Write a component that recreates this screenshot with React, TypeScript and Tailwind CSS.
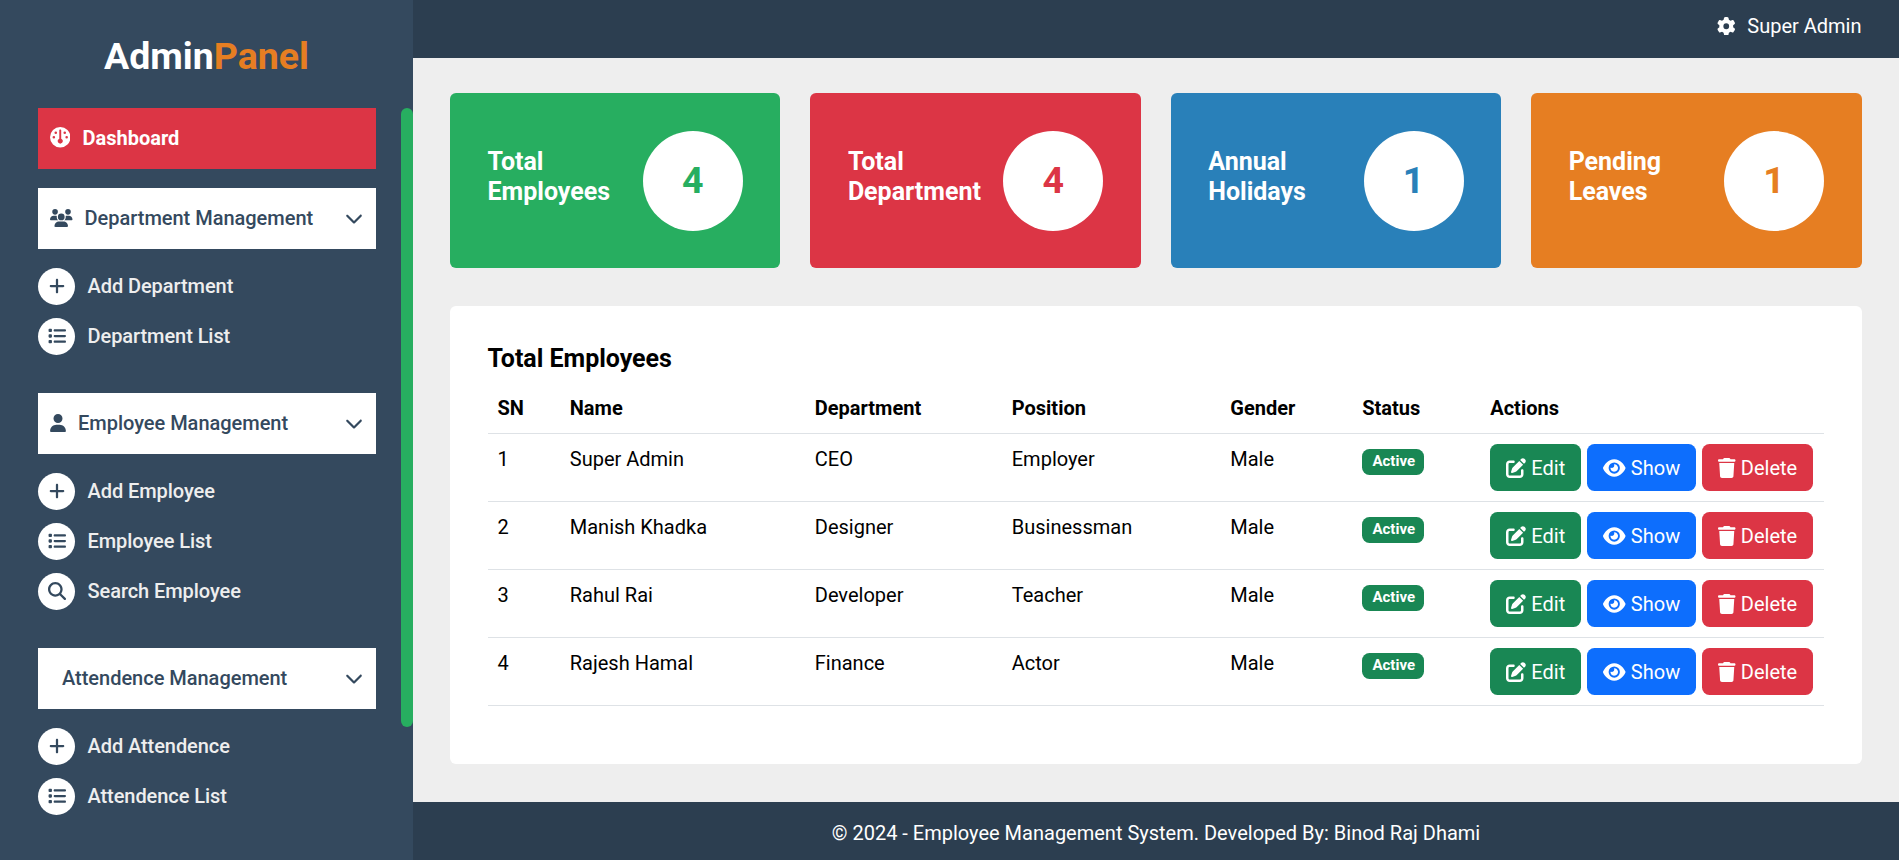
import { FaGauge, FaUsers, FaUser, FaPlus, FaList, FaMagnifyingGlass, FaChevronDown, FaGear, FaPenToSquare, FaEye, FaTrash } from "react-icons/fa6";
import type { ReactNode } from "react";

type Link = { label: string; icon: ReactNode };

function Group({ icon, title, links, className = "" }: { icon?: ReactNode; title: string; links: Link[]; className?: string }) {
  return (
    <section className={className}>
      <div className="flex h-[61.5px] items-center bg-white pl-3 pr-[13px] text-[20px] font-medium text-[#34495e]">
        {icon}
        <span className="ml-[12px] tracking-[-0.02px]">{title}</span>
        <FaChevronDown className="ml-auto text-[18px]" />
      </div>
      <ul className="mt-[18.5px] flex flex-col gap-[12.5px]">
        {links.map((l) => (
          <li key={l.label} className="flex items-center text-[20px] font-medium text-[#eee]">
            <span className="flex h-[37.5px] w-[37px] items-center justify-center rounded-full bg-white pb-px text-[18px] text-[#34495e]">{l.icon}</span>
            <span className="ml-[12.5px] pb-[1.5px] tracking-[-0.07px]">{l.label}</span>
          </li>
        ))}
      </ul>
    </section>
  );
}

const stats = [
  { a: "Total", b: "Employees", n: 4, bg: "bg-[#27ae60]", fg: "text-[#27ae60]" },
  { a: "Total", b: "Department", n: 4, bg: "bg-[#dc3545]", fg: "text-[#dc3545]" },
  { a: "Annual", b: "Holidays", n: 1, bg: "bg-[#2980b9]", fg: "text-[#2980b9]" },
  { a: "Pending", b: "Leaves", n: 1, bg: "bg-[#e67e22]", fg: "text-[#e67e22]" },
];

const rows = [
  ["1", "Super Admin", "CEO", "Employer", "Male"],
  ["2", "Manish Khadka", "Designer", "Businessman", "Male"],
  ["3", "Rahul Rai", "Developer", "Teacher", "Male"],
  ["4", "Rajesh Hamal", "Finance", "Actor", "Male"],
];

const cols = "grid grid-cols-[72.25px_245px_197px_218.5px_132px_128px_1fr] border-b border-[#dee2e6]";
const btn = "flex h-[47px] items-center justify-center gap-[5px] rounded-[7.5px] text-[20px] text-white";

export default function App() {
  return (
    <div className="flex h-[860px] w-full overflow-hidden bg-[#eee] font-[Roboto,sans-serif] text-black">
      <aside className="flex w-[413px] shrink-0 flex-col bg-[#34495e]">
        <h1 className="flex h-[108px] items-center justify-center pt-[5px] text-[37.5px] font-bold leading-none text-white">
          Admin<span className="text-[#e67e22]">Panel</span>
        </h1>
        <div className="flex justify-between">
          <nav className="ml-[38px] w-[338px]">
            <div className="flex h-[61px] items-center bg-[#dc3545] pb-[2px] pl-[11.5px] text-[20px] font-bold text-white">
              <FaGauge className="text-[20.5px]" />
              <span className="ml-[12.5px]">Dashboard</span>
            </div>
            <Group
              className="mt-[18.5px]"
              icon={<FaUsers className="h-[20px] w-[22.5px]" />}
              title="Department Management"
              links={[
                { label: "Add Department", icon: <FaPlus /> },
                { label: "Department List", icon: <FaList /> },
              ]}
            />
            <Group
              className="mt-[37.5px]"
              icon={<FaUser className="h-[18px] w-[16px]" />}
              title="Employee Management"
              links={[
                { label: "Add Employee", icon: <FaPlus /> },
                { label: "Employee List", icon: <FaList /> },
                { label: "Search Employee", icon: <FaMagnifyingGlass /> },
              ]}
            />
            <Group
              className="mt-[37.5px]"
              title="Attendence Management"
              links={[
                { label: "Add Attendence", icon: <FaPlus /> },
                { label: "Attendence List", icon: <FaList /> },
              ]}
            />
          </nav>
          <div className="h-[619px] w-3 rounded-full bg-[#27ae60]" />
        </div>
      </aside>

      <div className="flex min-w-0 flex-1 flex-col">
        <header className="flex h-[58px] items-center justify-end bg-[#2c3e50] pb-[6px] pr-[37.5px] text-[20px] text-white">
          <FaGear className="text-[18.5px]" />
          <span className="ml-[11.5px]">Super Admin</span>
        </header>

        <main className="flex-1 pl-[37px] pr-[37.5px] pt-[35px]">
          <div className="grid grid-cols-4 gap-[30px]">
            {stats.map((s) => (
              <div key={s.b} className={`flex h-[175px] items-center justify-between rounded-[6px] px-[37.5px] ${s.bg}`}>
                <div className="pb-[8px] text-[25px] font-bold leading-[30px] text-white">
                  {s.a}
                  <br />
                  {s.b}
                </div>
                <div className={`flex size-[100px] items-center justify-center rounded-full bg-white text-[37.5px] font-bold ${s.fg}`}>{s.n}</div>
              </div>
            ))}
          </div>

          <section className="mt-[38px] h-[458px] rounded-[6px] bg-white px-[37.5px] pt-[38px]">
            <h2 className="h-[39px] text-[25px] font-bold leading-[30px] tracking-[-0.03px]">Total Employees</h2>
            <div className={`${cols} h-[51px] text-[20px] font-bold leading-[30px]`}>
              {["SN", "Name", "Department", "Position", "Gender", "Status", "Actions"].map((h) => (
                <div key={h} className="px-[10px] pt-[9.5px]">{h}</div>
              ))}
            </div>
            {rows.map((r) => (
              <div key={r[0]} className={`${cols} h-[68px] text-[20px] leading-[30px]`}>
                {r.map((c, i) => (
                  <div key={i} className="p-[10px]">{c}</div>
                ))}
                <div className="px-[10px] pt-[15px]">
                  <span className="flex h-[26px] w-[62px] items-center justify-center rounded-[7.5px] bg-[#198754] pb-px pl-px text-[15px] font-bold leading-none text-white">Active</span>
                </div>
                <div className="flex gap-[6px] p-[10px]">
                  <button className={`${btn} w-[91px] bg-[#198754]`}><FaPenToSquare />Edit</button>
                  <button className={`${btn} w-[109px] bg-[#0d6efd]`}><FaEye className="w-[22.5px]" />Show</button>
                  <button className={`${btn} w-[111px] bg-[#dc3545]`}><FaTrash className="w-[17.5px]" />Delete</button>
                </div>
              </div>
            ))}
          </section>
        </main>

        <footer className="flex h-[58px] items-center justify-center bg-[#2c3e50] pt-[3px] text-[20px] text-white">
          © 2024 - Employee Management System. Developed By: Binod Raj Dhami
        </footer>
      </div>
    </div>
  );
}
